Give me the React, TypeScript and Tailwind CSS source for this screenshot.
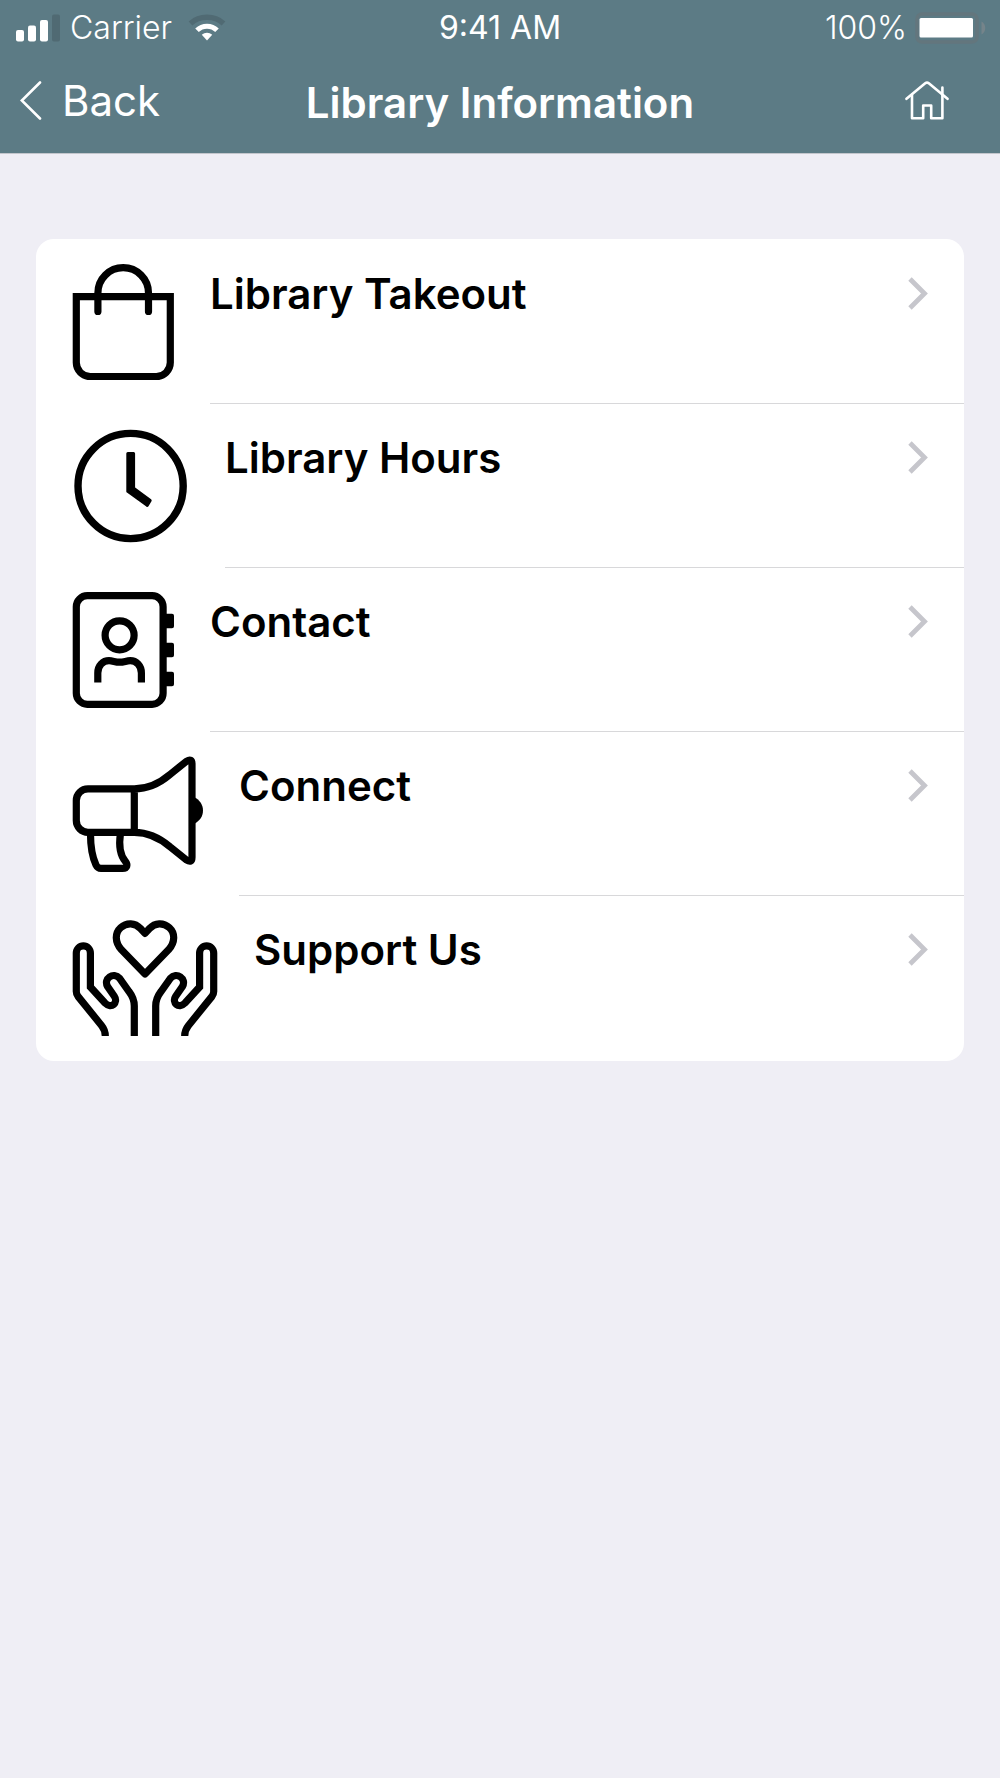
import React from "react";

type MenuItem = {
    label: string;
    href: string;
    icon: React.ReactNode;
};

const BagIcon = () => (
    <svg width="102" height="116" viewBox="0 0 102 116" fill="none" stroke="currentColor" strokeWidth="7.2" aria-hidden="true">
        <path d="M4.3 32.6H98.3V98.6a14 14 0 0 1-14 14H18.3a14 14 0 0 1-14-14Z" />
        <path d="M25.9 47.4V29a25.3 25.3 0 0 1 50.6 0V47.4" strokeLinecap="round" />
    </svg>
);

const ClockIcon = () => (
    <svg width="117" height="116" viewBox="0 0 117 116" fill="none" stroke="currentColor" aria-hidden="true">
        <circle cx="58.6" cy="58" r="52.6" strokeWidth="7.4" />
        <path d="M55.8 25.5H61.6V60.2L78.2 72.4L75.2 77.4L55.8 63.4Z" fill="currentColor" strokeWidth="3" strokeLinejoin="round" />
    </svg>
);

const ContactIcon = () => (
    <svg width="102" height="116" viewBox="0 0 102 116" fill="none" stroke="currentColor" strokeWidth="7.2" aria-hidden="true">
        <rect x="4.3" y="3.7" width="86.8" height="108.6" rx="11" />
        <circle cx="47.6" cy="43.3" r="14.5" />
        <path d="M25.8 90.6V81C25.8 73.6 31 68.7 37 68.7C41 68.7 43 70.2 47.6 70.2S54.2 68.7 58.2 68.7C64.2 68.7 69.4 73.6 69.4 81V90.6" />
        <path d="M93 21.8h7a2 2 0 0 1 2 2v10.4a2 2 0 0 1-2 2h-7zM93 50.8h7a2 2 0 0 1 2 2v10.4a2 2 0 0 1-2 2h-7zM93 79.8h7a2 2 0 0 1 2 2v10.4a2 2 0 0 1-2 2h-7z" fill="currentColor" stroke="none" />
    </svg>
);

const MegaphoneIcon = () => (
    <svg width="131" height="116" viewBox="0 0 131 116" fill="none" stroke="currentColor" strokeWidth="7.2" aria-hidden="true">
        <path d="M62.3 32.9H16a11.7 11.7 0 0 0-11.7 11.7V64.6a11.7 11.7 0 0 0 11.7 11.7H62.3ZM62.3 32.9C76 32.9 88 27 98 18.5L114.5 5.2Q120 1.8 120 8V101.2Q120 107.4 114.5 104L98 90.7C88 82.2 76 76.3 62.3 76.3" strokeLinejoin="round" />
        <path d="M18.5 78C18.5 91 20.3 101 24 109Q25.6 112.4 29 112.4H50.5C55.5 112.4 55.8 108.5 53.5 105.6C47.5 98.5 46.6 90 48.4 78" />
        <path d="M122 41C128 44 131 49 131 54.6S128 65 122 68Z" fill="currentColor" stroke="none" />
    </svg>
);

const hand =
    "M33.3 116C33.3 111.5 32.2 108.8 29.7 105.7L6 76.4Q4.3 74.4 4.3 71.6V33a7.05 7.05 0 0 1 14.1 0V67L33 83C39.5 89.5 46.5 82.5 42.3 76.3L35.6 66.6C31 58.6 41.5 51.4 47.7 58.4L57 71.5Q62.3 78.4 62.3 86V116";

const SupportIcon = () => (
    <svg width="146" height="116" viewBox="0 0 146 116" fill="none" stroke="currentColor" strokeWidth="7.2" aria-hidden="true">
        <path d="M73 54L49.5 29.8C42.6 22.2 42.8 13 48.7 7.6C54.7 2.2 63 2.6 68.5 8.5L73 13.4L77.5 8.5C83 2.6 91.3 2.2 97.3 7.6C103.2 13 103.4 22.2 96.5 29.8Z" strokeLinejoin="round" />
        <path d={hand} />
        <path d={hand} transform="matrix(-1 0 0 1 146 0)" />
    </svg>
);

const menu: MenuItem[] = [
    { label: "Library Takeout", href: "#takeout", icon: <BagIcon /> },
    { label: "Library Hours", href: "#hours", icon: <ClockIcon /> },
    { label: "Contact", href: "#contact", icon: <ContactIcon /> },
    { label: "Connect", href: "#connect", icon: <MegaphoneIcon /> },
    { label: "Support Us", href: "#support", icon: <SupportIcon /> },
];

function StatusBar() {
    return (
        <div className="grid h-14 grid-cols-[1fr_auto_1fr] items-center text-[32px] leading-9">
            <div className="flex items-center pl-4 font-light">
                <svg width="44" height="28" viewBox="0 0 44 28" fill="white" aria-hidden="true">
                    <rect x="0" y="16" width="8" height="11.5" rx="2" />
                    <rect x="12" y="11.5" width="8" height="16" rx="2" />
                    <rect x="24" y="6" width="8" height="21.5" rx="2" />
                    <rect x="36" y="0.5" width="8" height="27" rx="2" fill="#506a73" />
                </svg>
                <span className="ml-2.5">Carrier</span>
                <svg className="ml-4" width="38" height="28" viewBox="0 0 38 28" fill="none" aria-hidden="true">
                    <path d="M2.5 9.5C11.5 1.3 26.5 1.3 35.5 9.5" stroke="#506a73" strokeWidth="5.5" />
                    <path d="M9 16.3C14.5 10.8 23.5 10.8 29 16.3" stroke="white" strokeWidth="5" />
                    <path d="M13.8 20.7C16.7 18 21.3 18 24.2 20.7L19 26.5Z" fill="white" />
                </svg>
            </div>
            <time>9:41 AM</time>
            <div className="flex items-center justify-end pr-3.5 font-light">
                <span>100%</span>
                <svg className="ml-2" width="71" height="32" viewBox="0 0 71 32" fill="none" aria-hidden="true">
                    <rect x="2" y="2" width="60" height="28" rx="5" stroke="#63767d" strokeWidth="3.5" />
                    <rect x="4.5" y="6" width="53.5" height="19.5" rx="1.5" fill="white" />
                    <path d="M66.5 9.5C71.5 12 71.5 20 66.5 22.5Z" fill="#75848a" />
                </svg>
            </div>
        </div>
    );
}

function NavBar() {
    return (
        <nav className="grid h-[97px] grid-cols-[1fr_auto_1fr] items-center pb-4 pt-2">
            <button type="button" className="flex items-center justify-self-start pl-5 text-[42px] leading-[50px]">
                <svg width="22" height="40" viewBox="0 0 22 40" fill="none" stroke="white" strokeWidth="2.6" strokeLinecap="round" aria-hidden="true">
                    <path d="M20 1.5L1.8 19.5L20 37.5" />
                </svg>
                <span className="ml-5">Back</span>
            </button>
            <h1 className="pt-1 text-[42px] font-semibold leading-[50px]">Library Information</h1>
            <button type="button" aria-label="Home" className="justify-self-end pr-[51px]">
                <svg width="44" height="40" viewBox="0 0 44 40" fill="none" stroke="white" strokeWidth="2.6" strokeLinecap="round" strokeLinejoin="round" aria-hidden="true">
                    <path d="M1.5 17.8L20.2 2.3Q22 0.9 23.8 2.3L42.5 17.8" />
                    <path d="M7 13.7V37.3H18.2V24.5H26.2V37.3H37.4V6.5" />
                </svg>
            </button>
        </nav>
    );
}

function MenuRow({ item, last }: { item: MenuItem; last: boolean }) {
    return (
        <li>
            <a href={item.href} className="flex h-[164px] gap-9 pl-9">
                <span className="shrink-0 pt-6">{item.icon}</span>
                <span className={last ? "flex flex-1 items-start justify-between pr-9 pt-[29px]" : "flex flex-1 items-start justify-between border-b border-[#d8d8da] pr-9 pt-[29px]"}>
                    <span className="text-[42px] font-semibold leading-[50px]">{item.label}</span>
                    <svg className="mt-2" width="20" height="34" viewBox="0 0 20 34" fill="none" stroke="#c6c6cc" strokeWidth="4.8" aria-hidden="true">
                        <path d="M2 2L16.5 16.5L2 31" />
                    </svg>
                </span>
            </a>
        </li>
    );
}

export default function App() {
    return (
        <div className="min-h-screen bg-[#efeef5] font-['Inter','Liberation_Sans',sans-serif] text-black">
            <header className="border-b border-[#c3c6cc] bg-[#5c7b85] text-white">
                <StatusBar />
                <NavBar />
            </header>

            <main className="px-9 pt-[85px]">
                <ul className="overflow-hidden rounded-[18px] bg-white py-px">
                    {menu.map((item, i) => (
                        <MenuRow key={item.label} item={item} last={i === menu.length - 1} />
                    ))}
                </ul>
            </main>
        </div>
    );
}
